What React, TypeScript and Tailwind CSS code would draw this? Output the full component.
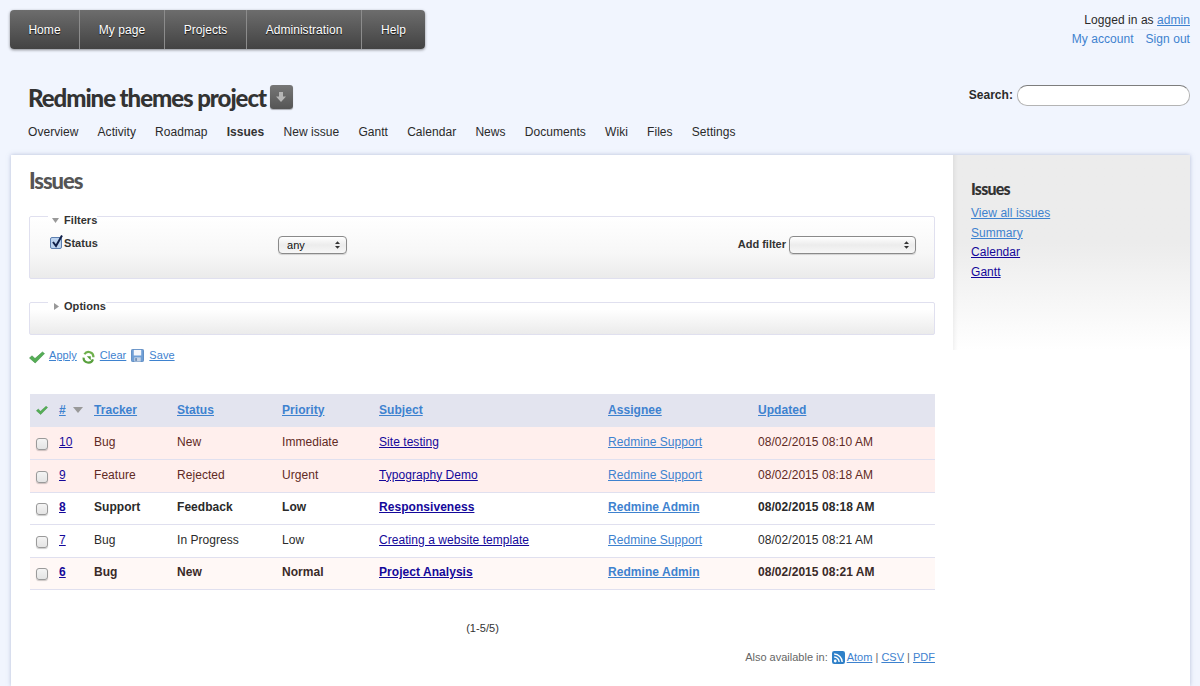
import React from 'react';

const link = 'text-[#3e82cf] underline';
const dark = 'text-[#14089a] underline';

const menu = [
  { label: 'Home', w: 'w-[70px]' },
  { label: 'My page', w: 'w-[85px]' },
  { label: 'Projects', w: 'w-[82px]' },
  { label: 'Administration', w: 'w-[115px]' },
  { label: 'Help', w: 'w-[63px]' },
];

const tabs = ['Overview', 'Activity', 'Roadmap', 'Issues', 'New issue', 'Gantt', 'Calendar', 'News', 'Documents', 'Wiki', 'Files', 'Settings'];

const rows = [
  { id: '10', tracker: 'Bug', status: 'New', priority: 'Immediate', subject: 'Site testing', who: 'Redmine Support', at: '08/02/2015 08:10 AM', bold: false, bg: 'bg-[#ffefed]', tone: 'text-[#5f2a24]' },
  { id: '9', tracker: 'Feature', status: 'Rejected', priority: 'Urgent', subject: 'Typography Demo', who: 'Redmine Support', at: '08/02/2015 08:18 AM', bold: false, bg: 'bg-[#ffefed]', tone: 'text-[#5f2a24]' },
  { id: '8', tracker: 'Support', status: 'Feedback', priority: 'Low', subject: 'Responsiveness', who: 'Redmine Admin', at: '08/02/2015 08:18 AM', bold: true, bg: 'bg-white', tone: 'text-[#2a2a2a]' },
  { id: '7', tracker: 'Bug', status: 'In Progress', priority: 'Low', subject: 'Creating a website template', who: 'Redmine Support', at: '08/02/2015 08:21 AM', bold: false, bg: 'bg-white', tone: 'text-[#2a2a2a]' },
  { id: '6', tracker: 'Bug', status: 'New', priority: 'Normal', subject: 'Project Analysis', who: 'Redmine Admin', at: '08/02/2015 08:21 AM', bold: true, bg: 'bg-[#fff8f6]', tone: 'text-[#3a2a28]' },
];

function Tick({ size = 16 }: { size?: number }) {
  return (
    <svg width={size} height={size} viewBox="0 0 16 16">
      <path d="M0.5 9 L3 6.8 L6 9.6 L13.4 3 L15.5 4.6 L6.2 14 Z" fill="#55ae55" stroke="#3f8f45" strokeWidth="0.6" strokeLinejoin="round" />
    </svg>
  );
}

function Reload() {
  return (
    <svg width="13" height="15" viewBox="0 0 14 15" fill="none">
      <path d="M2.6 4 A5.3 5.3 0 0 1 12.3 7.2" stroke="#6fb04c" strokeWidth="2.4" />
      <path d="M11.8 9.5 A5.2 5.2 0 0 1 1.7 7.6" stroke="#58a03c" strokeWidth="2.4" />
      <path d="M5.2 6.2 L9.4 6.2 L9.4 10.4 Z" fill="#4f9a36" />
    </svg>
  );
}

function Floppy() {
  return (
    <svg width="13" height="13" viewBox="0 0 14 14">
      <rect x="0.5" y="0.5" width="13" height="13" rx="1" fill="#6f9fd6" stroke="#5a88c0" />
      <rect x="3" y="1" width="8" height="6" fill="#f3f6fb" />
      <rect x="3.5" y="9" width="7" height="4.5" fill="#c6d4e6" />
      <rect x="4.5" y="9.8" width="2" height="3" fill="#6f8fb8" />
    </svg>
  );
}

function Rss() {
  return (
    <svg width="13" height="13" viewBox="0 0 12 12" fill="none">
      <rect width="12" height="12" rx="2" fill="#2f80c8" />
      <circle cx="3" cy="9.2" r="1.3" fill="#fff" />
      <path d="M2 5.6 A4.6 4.6 0 0 1 6.6 10.2" stroke="#fff" strokeWidth="1.3" />
      <path d="M2 2.8 A7.4 7.4 0 0 1 9.4 10.2" stroke="#fff" strokeWidth="1.3" />
    </svg>
  );
}

function Updown() {
  return (
    <svg width="5" height="8" viewBox="0 0 6 9" className="absolute right-[7px] top-[5px]">
      <path d="M3 0 L6 3.4 L0 3.4 Z M3 9 L0 5.6 L6 5.6 Z" fill="#333" />
    </svg>
  );
}

function RowCheck() {
  return <span className="block w-[12px] h-[12px] rounded-[3px] border border-[#9a9a9a] bg-gradient-to-b from-[#f4f4f4] to-[#e4e4e4] shadow-[0_1px_1px_rgba(0,0,0,0.2)]" />;
}

export default function App() {
  return (
    <div className="[font-family:Liberation_Sans,Arial,sans-serif] tracking-[0.05px] h-[686px] overflow-hidden bg-[#f1f5fe] text-[12px] text-[#2a2a2a]">
      <header className="relative h-[155px]">
        <div className="flex justify-between pl-[10px] pr-[10px] pt-[10px]">
          <nav className="flex h-[39px] w-[415px] rounded-[4px] overflow-hidden bg-gradient-to-b from-[#6d6d6d] to-[#434343] shadow-[0_1px_3px_rgba(0,0,0,0.45)]">
            {menu.map((m, i) => (
              <a key={m.label} className={`${m.w} flex items-center justify-center text-white [text-shadow:0_1px_1px_rgba(0,0,0,0.8)] ${i < menu.length - 1 ? 'border-r border-r-[#8c8c8c]' : ''}`}>
                {m.label}
              </a>
            ))}
          </nav>
          <div className="text-right">
            <div className="ml-auto w-fit h-[20px] leading-[20px] border-b border-[#e6ebf6]">
              Logged in as <a className={link}>admin</a>
            </div>
            <div className="h-[19px] leading-[19px] text-[#3e82cf] flex justify-end gap-[12px]">
              <a>My account</a>
              <a>Sign out</a>
            </div>
          </div>
        </div>
        <div className="flex justify-between items-start pl-[28px] pr-[10px] mt-[35px]">
          <div className="flex items-center gap-[4px]">
            <h1 className="[font-family:Lato,sans-serif] font-black text-[24px] leading-[28px] tracking-[-1.05px] text-[#333]">Redmine themes project</h1>
            <span className="-mt-[2px] w-[23px] h-[24px] rounded-[3px] bg-gradient-to-b from-[#777] to-[#555] flex items-center justify-center shadow-[0_1px_1px_rgba(0,0,0,0.3)]">
              <svg width="12" height="12" viewBox="0 0 12 12">
                <path d="M4 1 H8 V5.5 H11 L6 11 L1 5.5 H4 Z" fill="#b5b5b5" />
              </svg>
            </span>
          </div>
          <div className="flex items-center gap-[4px] mt-[1px]">
            <label className="font-bold pb-[2px]">Search:</label>
            <input className="w-[173px] h-[21px] rounded-[10px] border border-[#b4b4b4] border-t-[#7d7d7d] bg-white" />
          </div>
        </div>
        <ul className="flex gap-[19.15px] pl-[28px] mt-[13px] leading-[14px]">
          {tabs.map((t) => (
            <li key={t} className={t === 'Issues' ? 'font-bold text-[#333]' : 'text-[#2a2a2a]'}>{t}</li>
          ))}
        </ul>
      </header>

      <main className="flex ml-[11px] mr-[10px] h-[531px] bg-white shadow-[0_0_4px_rgba(120,135,180,0.5)]">
        <section className="w-[942px] shrink-0 pl-[18px] pr-[18px]">
          <h2 className="[font-family:Lato,sans-serif] font-black text-[22px] leading-[26px] tracking-[-1.1px] text-[#555] mt-[13px]">Issues</h2>

          <fieldset className="mt-[17px] h-[68px] border border-[#e0e0ef] rounded-[2px] pl-[18px] pr-[18px] bg-gradient-to-b from-white via-[#f7f7f7] via-60% to-[#ebebeb] text-[#333]">
            <legend className="relative top-[4px] flex items-center gap-[5px] h-[11px] pl-[4px] pr-0 font-bold text-[11px] leading-[11px]">
              <svg width="7" height="5" viewBox="0 0 7 5"><path d="M0 0 H7 L3.5 5 Z" fill="#999" /></svg>
              Filters
            </legend>
            <div className="flex items-start justify-between mt-[13px]">
              <div className="flex items-center w-[230px]">
                <span className="relative w-[12px] h-[12px] rounded-[2px] border border-[#5d7fb0] bg-[#bcd3ef] mr-[2px] ml-[2px]">
                  <svg width="13" height="15" viewBox="0 0 13 15" className="absolute left-[0px] -top-[4px]">
                    <path d="M2 8 L5 12 L11 1.5" fill="none" stroke="#10204a" strokeWidth="2" />
                  </svg>
                </span>
                <span className="font-bold text-[11px]">Status</span>
              </div>
              <div className="relative w-[69px] h-[18px] mt-[1px] mr-auto">
                <select className="appearance-none w-full h-full rounded-[4px] border border-[#8a8a8a] bg-gradient-to-b from-white via-[#ececec] to-[#f7f7f7] pl-[8px] text-[11px] text-[#111] shadow-[0_1px_1px_rgba(0,0,0,0.15)]">
                  <option>any</option>
                </select>
                <Updown />
              </div>
              <div className="flex items-center gap-[3px]">
                <span className="font-bold text-[11px] tracking-normal">Add filter</span>
                <div className="relative w-[127px] h-[18px] mt-[1px]">
                  <select className="appearance-none w-full h-full rounded-[4px] border border-[#8a8a8a] bg-gradient-to-b from-white via-[#ececec] to-[#f7f7f7] shadow-[0_1px_1px_rgba(0,0,0,0.15)]" />
                  <Updown />
                </div>
              </div>
            </div>
          </fieldset>

          <fieldset className="mt-[18px] h-[38px] border border-[#e0e0ef] rounded-[2px] pl-[18px] bg-gradient-to-b from-white from-20% to-[#ebebeb] text-[#333]">
            <legend className="relative top-[4px] flex items-center gap-[5px] h-[11px] pl-[6px] pr-0 font-bold text-[11px] leading-[11px]">
              <svg width="5" height="7" viewBox="0 0 5 7"><path d="M0 0 V7 L5 3.5 Z" fill="#999" /></svg>
              Options
            </legend>
          </fieldset>

          <div className="flex items-start mt-[11px] text-[11px] h-[48px]">
            <span className="mt-[3px] mr-[4px]"><Tick /></span>
            <a className={`${link} mt-[1px]`}>Apply</a>
            <span className="ml-[5px] mt-[4px] mr-[5px]"><Reload /></span>
            <a className={`${link} mt-[1px]`}>Clear</a>
            <span className="ml-[5px] mt-[3px] mr-[5px]"><Floppy /></span>
            <a className={`${link} mt-[1px]`}>Save</a>
          </div>

          <table className="ml-[1px] w-[905px] table-fixed border-collapse">
            <colgroup>
              <col className="w-[29px]" />
              <col className="w-[35px]" />
              <col className="w-[83px]" />
              <col className="w-[105px]" />
              <col className="w-[97px]" />
              <col className="w-[229px]" />
              <col className="w-[150px]" />
              <col className="w-[177px]" />
            </colgroup>
            <thead>
              <tr className="h-[33px] bg-[#e3e4ef] text-left font-bold">
                <th className="pl-[6px] pb-[2px]"><Tick size={12} /></th>
                <th className="pb-[2px]">
                  <span className="flex items-center gap-[7px]">
                    <a className={link}>#</a>
                    <svg width="10" height="6" viewBox="0 0 10 6"><path d="M0 0 H10 L5 6 Z" fill="#999" /></svg>
                  </span>
                </th>
                {['Tracker', 'Status', 'Priority', 'Subject', 'Assignee', 'Updated'].map((h) => (
                  <th key={h} className="font-bold pb-[2px]"><a className={link}>{h}</a></th>
                ))}
              </tr>
            </thead>
            <tbody>
              {rows.map((r) => (
                <tr key={r.id} className={`h-[32.5px] border-b border-[#e0e0ef] ${r.bg} ${r.tone} ${r.bold ? 'font-bold' : ''}`}>
                  <td className="pl-[6px] pt-[2px]"><RowCheck /></td>
                  <td className="pb-[2px]"><a className={dark}>{r.id}</a></td>
                  <td className="pb-[2px]">{r.tracker}</td>
                  <td className="pb-[2px]">{r.status}</td>
                  <td className="pb-[2px]">{r.priority}</td>
                  <td className="pb-[2px]"><a className={dark}>{r.subject}</a></td>
                  <td className="pb-[2px]"><a className={link}>{r.who}</a></td>
                  <td className="pb-[2px]">{r.at}</td>
                </tr>
              ))}
            </tbody>
          </table>

          <p className="ml-[1px] w-[905px] text-center text-[11px] text-[#333] mt-[32px] leading-[13px]">(1-5/5)</p>
          <p className="ml-[1px] w-[905px] flex justify-end items-center gap-[2px] text-[11px] text-[#666] mt-[16px] leading-[13px] tracking-normal">
            <span className="mr-[2px]">Also available in:</span>
            <Rss />
            <span><a className={link}>Atom</a> | <a className={link}>CSV</a> | <a className={link}>PDF</a></span>
          </p>
        </section>

        <aside className="flex-1 h-[195px] pl-[18px] pt-[25px] bg-gradient-to-b from-[#ececec] from-45% to-white shadow-[inset_6px_0_5px_-5px_rgba(0,0,0,0.08)]">
          <h3 className="[font-family:Lato,sans-serif] font-black text-[16px] leading-[18px] tracking-[-0.8px] text-[#333]">Issues</h3>
          <ul className="mt-[6px] leading-[19.7px]">
            <li><a className={link}>View all issues</a></li>
            <li><a className={link}>Summary</a></li>
            <li><a className={dark}>Calendar</a></li>
            <li><a className={dark}>Gantt</a></li>
          </ul>
        </aside>
      </main>
    </div>
  );
}
